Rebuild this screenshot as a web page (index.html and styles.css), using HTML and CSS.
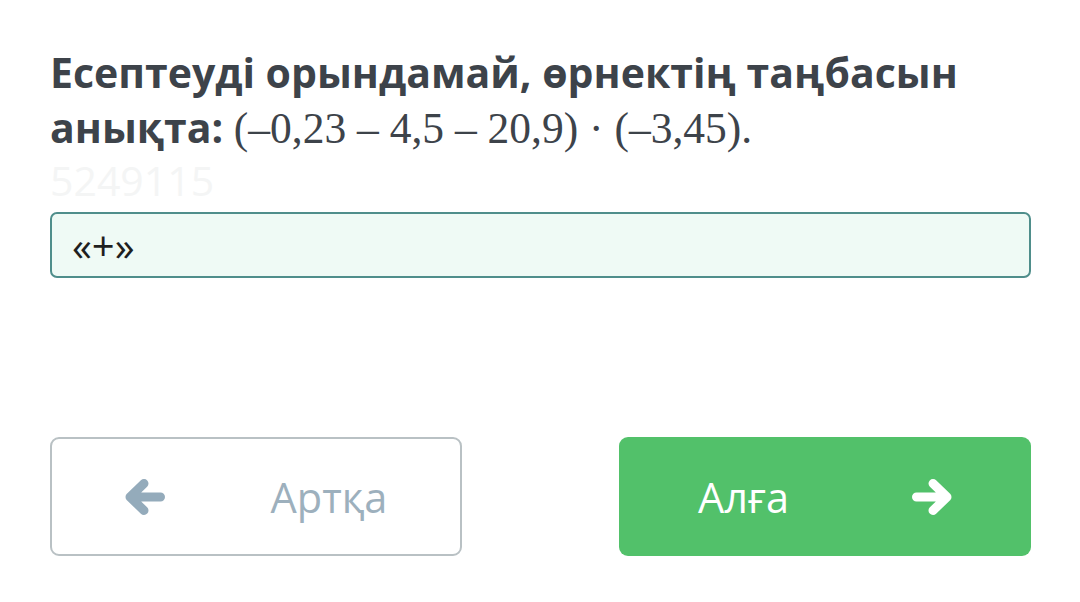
FILE: index.html
```html
<!DOCTYPE html>
<html lang="kk">
<head>
<meta charset="utf-8">
<link rel="stylesheet" href="styles.css">
</head>
<body>
<main class="page">
  <h1 class="question">Есептеуді орындамай, өрнектің таңбасын<br>анықта: <span class="math">(–0,23 – 4,5 – 20,9) · (–3,45).</span></h1>
  <div class="watermark">5249115</div>
  <div class="answer">«+»</div>
  <div class="nav">
    <button class="btn btn-back">
      <svg class="arrow" width="40" height="36" viewBox="0 0 40 36"><path d="M5 18H35.5M19 4.5L5 18L19 31.5" fill="none" stroke="currentColor" stroke-width="9" stroke-linecap="round" stroke-linejoin="round"/></svg>
      <span>Артқа</span>
    </button>
    <button class="btn btn-next">
      <span>Алға</span>
      <svg class="arrow" width="40" height="36" viewBox="0 0 40 36"><path d="M35 18H4.5M21 4.5L35 18L21 31.5" fill="none" stroke="currentColor" stroke-width="9" stroke-linecap="round" stroke-linejoin="round"/></svg>
    </button>
  </div>
</main>
</body>
</html>
```
FILE: styles.css
```css
html, body {
  margin: 0;
  padding: 0;
  background: #ffffff;
}
.page {
  padding: 45px 49px 0 50px;
  font-family: "Open Sans", "Noto Sans", sans-serif;
}
.question {
  margin: 0;
  font-size: 41px;
  line-height: 55px;
  font-weight: 700;
  color: #3d434a;
}
.math {
  font-family: "Liberation Serif", "DejaVu Serif", serif;
  font-weight: 400;
  font-size: 43.5px;
  line-height: 1;
}
.watermark {
  font-size: 41px;
  line-height: 50px;
  color: #f4f5f5;
  font-weight: 400;
}
.answer {
  margin-top: 7px;
  height: 62px;
  border: 2px solid #4f8e8b;
  border-radius: 7px;
  background: #effaf5;
  display: flex;
  align-items: center;
  padding-left: 20px;
  font-size: 40px;
  color: #1f1f1f;
}
.nav {
  margin-top: 159px;
  display: flex;
  justify-content: space-between;
}
.btn {
  width: 412px;
  height: 119px;
  box-sizing: border-box;
  border-radius: 9px;
  display: flex;
  align-items: center;
  justify-content: center;
  font-family: "Open Sans", "Noto Sans", sans-serif;
  font-size: 41.5px;
  padding: 0;
}
.btn-back {
  background: #ffffff;
  border: 2px solid #b9c1c4;
  color: #9db0bd;
  gap: 106px;
}
.btn-back .arrow { color: #94abbb; }
.btn-next {
  background: #52c16a;
  border: none;
  color: #ffffff;
  gap: 123px;
}
.arrow { display: block; }
```
